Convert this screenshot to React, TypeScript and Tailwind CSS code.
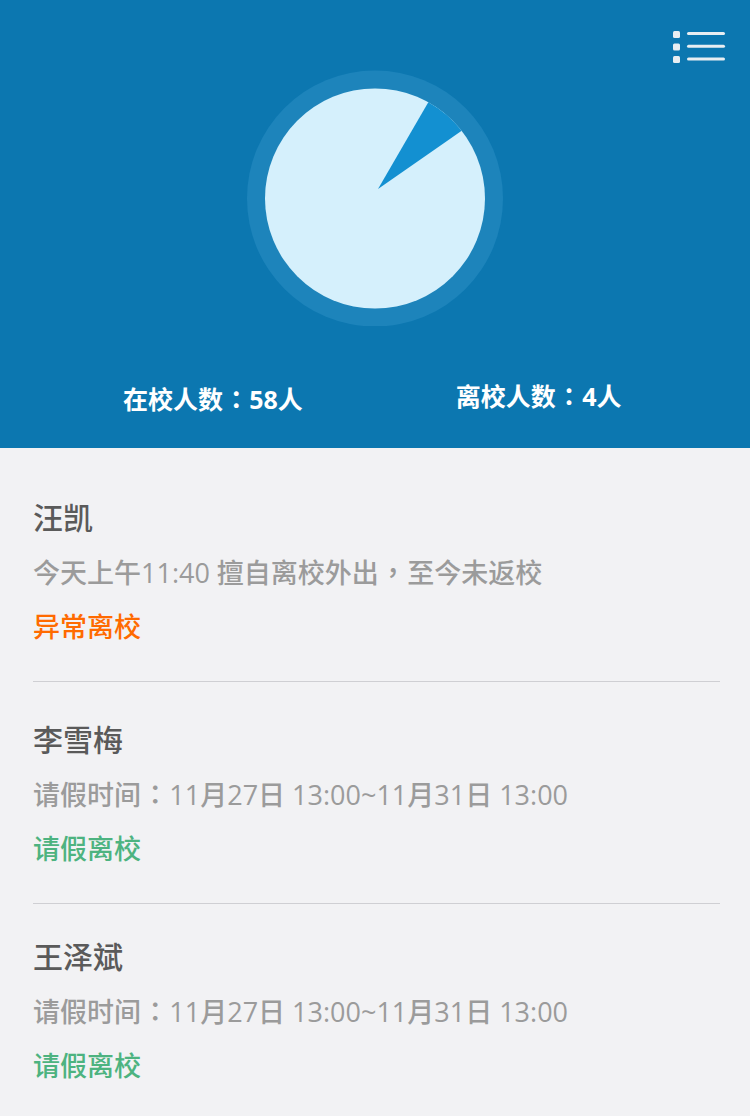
import React from 'react';

// full-width punctuation, centred in a full em box
const P = ({ children }: { children: React.ReactNode }) => (
  <span
    className="inline-block w-[1.05em] text-center"
    style={{ fontFamily: '"Noto Sans CJK TC", sans-serif' }}
  >
    {children}
  </span>
);

const students = [
  {
    name: '汪凯',
    detail: (
      <>
        今天上午11:40 擅自离校外出<P>，</P>至今未返校
      </>
    ),
    status: '异常离校',
    statusColor: 'text-[#ff6a00]',
  },
  {
    name: '李雪梅',
    detail: (
      <>
        请假时间<P>：</P>11月27日 13:00~11月31日 13:00
      </>
    ),
    status: '请假离校',
    statusColor: 'text-[#4db380]',
  },
  {
    name: '王泽斌',
    detail: (
      <>
        请假时间<P>：</P>11月27日 13:00~11月31日 13:00
      </>
    ),
    status: '请假离校',
    statusColor: 'text-[#4db380]',
  },
];

const MenuIcon = () => (
  <svg width="54" height="36" viewBox="0 0 54 36" fill="none">
    <rect x="0" y="3" width="7" height="7" rx="1.5" fill="#e8eef2" />
    <rect x="0" y="15.5" width="7" height="7" rx="1.5" fill="#e8eef2" />
    <rect x="0" y="28" width="7" height="7" rx="1.5" fill="#e8eef2" />
    <line x1="15.5" y1="5.5" x2="50.5" y2="5.5" stroke="#e8eef2" strokeWidth="3" strokeLinecap="round" />
    <line x1="15.5" y1="18.3" x2="50.5" y2="18.3" stroke="#e8eef2" strokeWidth="3" strokeLinecap="round" />
    <line x1="15.5" y1="31" x2="50.5" y2="31" stroke="#e8eef2" strokeWidth="3" strokeLinecap="round" />
  </svg>
);

const PieChart = () => (
  <svg width="256" height="256" viewBox="0 0 256 256">
    <circle cx="128" cy="128.5" r="128" fill="#1d84bb" />
    <circle cx="128" cy="128.5" r="110" fill="#d5f0fc" />
    <path d="M131 119 L181.3 32.3 A110 110 0 0 1 214.7 60.8 Z" fill="#1390d1" />
  </svg>
);

const App = () => {
  return (
    <div
      className="w-[750px] min-h-[1116px] bg-[#f2f2f4]"
      style={{ fontFamily: '"Open Sans", "Noto Sans CJK SC", sans-serif' }}
    >
      {/* Header */}
      <div className="relative h-[448px] bg-[#0c77b0] flex flex-col items-center">
        <div className="absolute top-[28px] right-[23px]">
          <MenuIcon />
        </div>
        <div className="pt-[70px]">
          <PieChart />
        </div>
        <div className="w-full flex items-start pl-[123px] gap-[153px] mt-[55px] text-white font-bold text-[25px] leading-[34px]">
          <span>在校人数<P>：</P>58人</span>
          <span className="-mt-[3px]">离校人数<P>：</P>4人</span>
        </div>
      </div>

      {/* List */}
      <div className="pt-[12px] px-[33px]">
        {students.map((s, i) => (
          <div
            key={s.name}
            className={`${i === 2 ? 'pt-[33px]' : 'pt-[38px]'} pb-[34px] font-medium ${i < students.length - 1 ? 'border-b border-[#cfcfd3] mr-[-3px]' : ''}`}
          >
            <div className="text-[30px] leading-[40px] text-[#5a5a5a]">{s.name}</div>
            <div className="mt-[14px] text-[27px] leading-[40px] text-[#9b9b9b]">{s.detail}</div>
            <div className={`mt-[14px] text-[27px] leading-[40px] ${s.statusColor}`}>{s.status}</div>
          </div>
        ))}
      </div>
    </div>
  );
};

export default App;
